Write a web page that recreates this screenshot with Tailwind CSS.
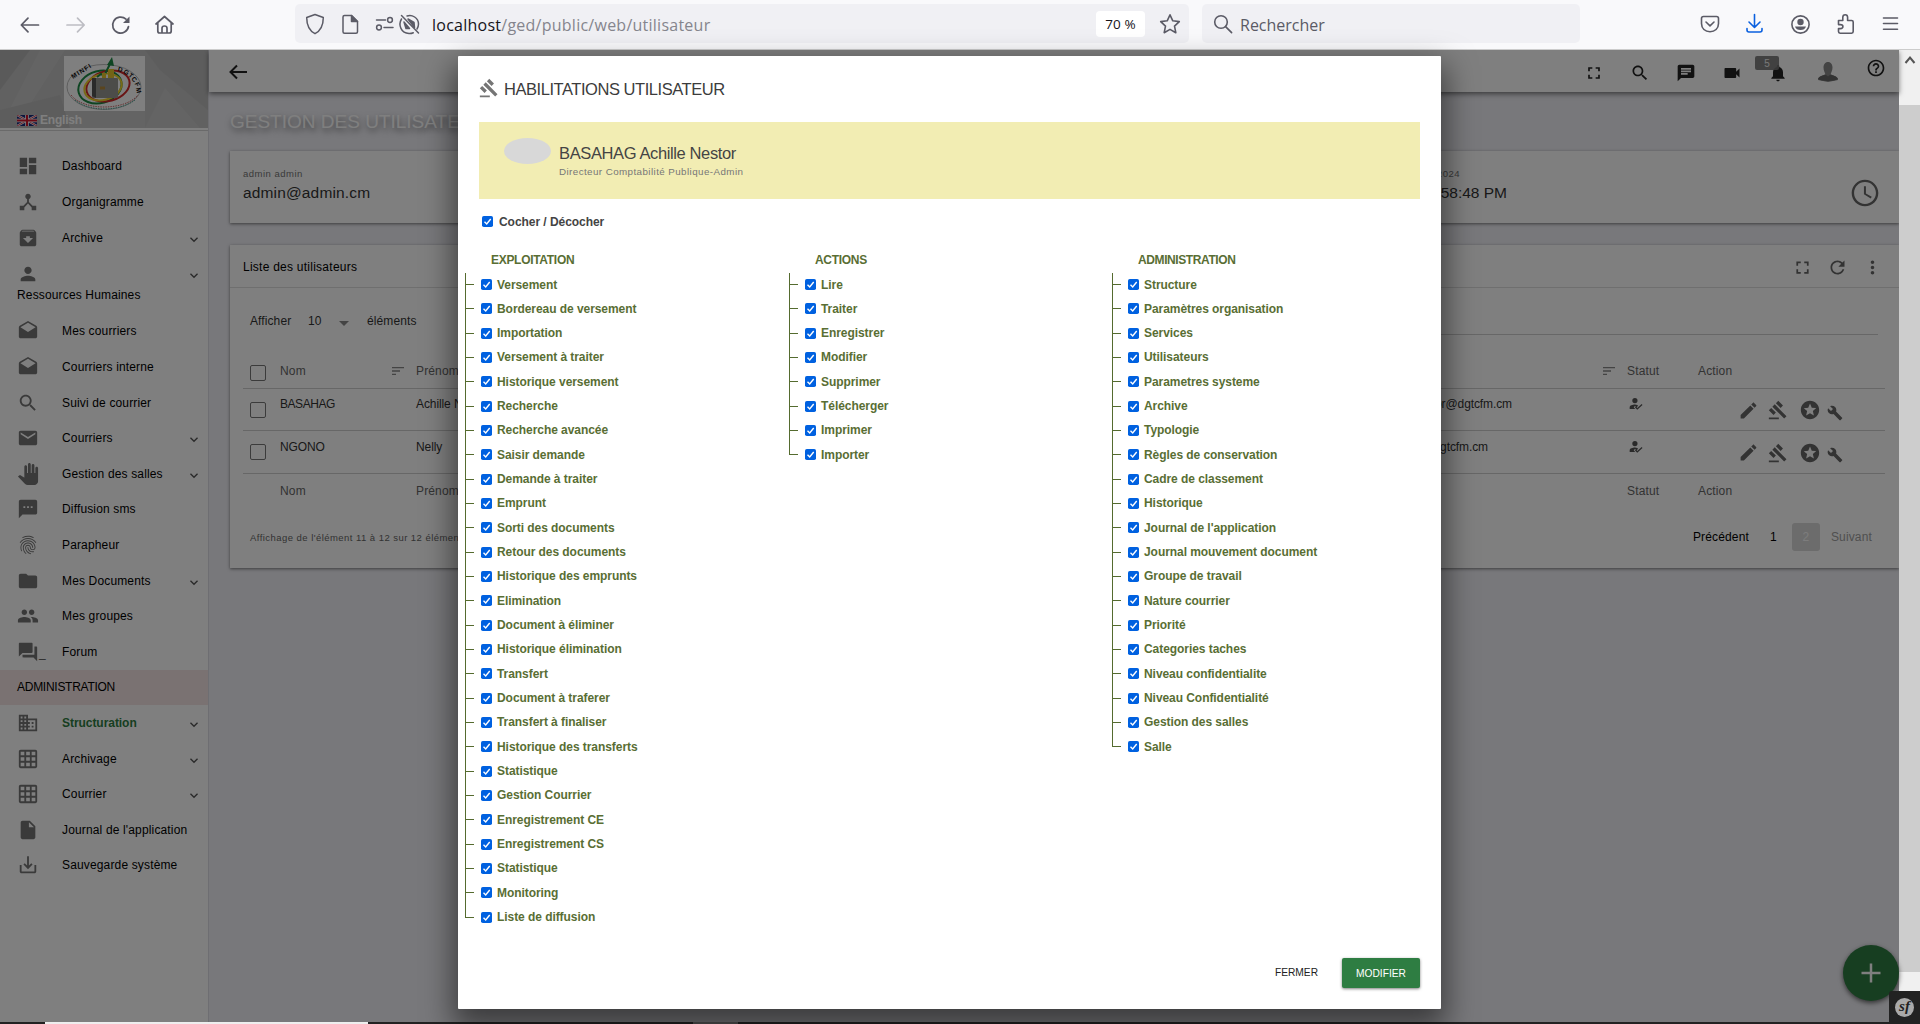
<!DOCTYPE html>
<html lang="fr">
<head>
<meta charset="utf-8">
<title>Habilitations utilisateur</title>
<script src="https://cdn.jsdelivr.net/npm/@tailwindcss/browser@4"></script>
</head>
<body class="relative h-[1024px] w-[1920px] overflow-hidden bg-[#222] font-['Liberation_Sans',sans-serif] text-[12px]">

<svg class="hidden">
  <symbol id="dashboard" viewBox="0 0 24 24"><path d="M3 13h8V3H3v10zm0 8h8v-6H3v6zm10 0h8V11h-8v10zm0-18v6h8V3h-8z"/></symbol>
  <symbol id="hub" viewBox="0 0 24 24"><path d="M17 16l-4-4V8.82C14.16 8.4 15 7.3 15 6c0-1.66-1.34-3-3-3S9 4.34 9 6c0 1.3.84 2.4 2 2.82V12l-4 4H3v5h5v-3.05l4-4.2 4 4.2V21h5v-5h-4z"/></symbol>
  <symbol id="archive" viewBox="0 0 24 24"><path d="M20.54 5.23l-1.39-1.68C18.88 3.21 18.47 3 18 3H6c-.47 0-.88.21-1.16.55L3.46 5.23C3.17 5.57 3 6.02 3 6.5V19c0 1.1.9 2 2 2h14c1.1 0 2-.9 2-2V6.5c0-.48-.17-.93-.46-1.27zM12 17.5L6.5 12H10v-2h4v2h3.5L12 17.5zM5.12 5l.81-1h12l.94 1H5.12z"/></symbol>
  <symbol id="person" viewBox="0 0 24 24"><path d="M12 12c2.21 0 4-1.79 4-4s-1.79-4-4-4-4 1.79-4 4 1.79 4 4 4zm0 2c-2.67 0-8 1.34-8 4v2h16v-2c0-2.66-5.33-4-8-4z"/></symbol>
  <symbol id="drafts" viewBox="0 0 24 24"><path d="M21.99 8c0-.72-.37-1.35-.94-1.7L12 1 2.95 6.3C2.38 6.65 2 7.28 2 8v10c0 1.1.9 2 2 2h16c1.1 0 2-.9 2-2l-.01-10zM12 13L3.74 7.84 12 3l8.26 4.84L12 13z"/></symbol>
  <symbol id="search" viewBox="0 0 24 24"><path d="M15.5 14h-.79l-.28-.27C15.41 12.59 16 11.11 16 9.5 16 5.91 13.09 3 9.5 3S3 5.91 3 9.5 5.91 16 9.5 16c1.61 0 3.09-.59 4.23-1.57l.27.28v.79l5 4.99L20.49 19l-4.99-5zm-6 0C7.01 14 5 11.99 5 9.5S7.01 5 9.5 5 14 7.01 14 9.5 11.99 14 9.5 14z"/></symbol>
  <symbol id="email" viewBox="0 0 24 24"><path d="M20 4H4c-1.1 0-1.99.9-1.99 2L2 18c0 1.1.9 2 2 2h16c1.1 0 2-.9 2-2V6c0-1.1-.9-2-2-2zm0 4l-8 5-8-5V6l8 5 8-5v2z"/></symbol>
  <symbol id="hand" viewBox="0 0 24 24"><path d="M23 5.5V20c0 2.2-1.8 4-4 4h-7.3c-1.08 0-2.1-.43-2.85-1.19L1 14.83s1.26-1.23 1.3-1.25c.22-.19.49-.29.79-.29.22 0 .42.06.6.16.04.01 4.31 2.46 4.31 2.46V4c0-.83.67-1.5 1.5-1.5S11 3.17 11 4v7h1V1.5c0-.83.67-1.5 1.5-1.5S15 .67 15 1.5V11h1V2.5c0-.83.67-1.5 1.5-1.5s1.5.67 1.5 1.5V11h1V5.5c0-.83.67-1.5 1.5-1.5s1.5.67 1.5 1.5z"/></symbol>
  <symbol id="sms" viewBox="0 0 24 24"><path d="M20 2H4c-1.1 0-1.99.9-1.99 2L2 22l4-4h14c1.1 0 2-.9 2-2V4c0-1.1-.9-2-2-2zM9 11H7V9h2v2zm4 0h-2V9h2v2zm4 0h-2V9h2v2z"/></symbol>
  <symbol id="finger" viewBox="0 0 24 24"><path d="M17.81 4.47c-.08 0-.16-.02-.23-.06C15.66 3.42 14 3 12.01 3c-1.98 0-3.86.47-5.57 1.41-.24.13-.54.04-.68-.2-.13-.24-.04-.55.2-.68C7.82 2.52 9.86 2 12.01 2c2.13 0 3.99.47 6.03 1.52.25.13.34.43.21.67-.09.18-.26.28-.44.28zM3.5 9.72c-.1 0-.2-.03-.29-.09-.23-.16-.28-.47-.12-.7.99-1.4 2.25-2.5 3.75-3.27C9.98 4.04 14 4.03 17.15 5.65c1.5.77 2.76 1.86 3.75 3.25.16.22.11.54-.12.7-.23.16-.54.11-.7-.12-.9-1.26-2.04-2.25-3.39-2.94-2.87-1.47-6.54-1.47-9.4.01-1.36.7-2.5 1.7-3.4 2.96-.08.14-.23.21-.39.21zm6.25 12.07c-.13 0-.26-.05-.35-.15-.87-.87-1.34-1.43-2.01-2.64-.69-1.23-1.05-2.73-1.05-4.34 0-2.97 2.54-5.39 5.66-5.39s5.66 2.42 5.66 5.39c0 .28-.22.5-.5.5s-.5-.22-.5-.5c0-2.42-2.09-4.39-4.66-4.39-2.57 0-4.66 1.97-4.66 4.39 0 1.44.32 2.77.93 3.85.64 1.15 1.08 1.64 1.85 2.42.19.2.19.51 0 .71-.11.1-.24.15-.37.15zm7.17-1.85c-1.19 0-2.24-.3-3.1-.89-1.49-1.01-2.38-2.65-2.38-4.39 0-.28.22-.5.5-.5s.5.22.5.5c0 1.41.72 2.74 1.94 3.56.71.48 1.54.71 2.54.71.24 0 .64-.03 1.04-.1.27-.05.53.13.58.41.05.27-.13.53-.41.58-.57.11-1.07.12-1.21.12zM14.91 22c-.04 0-.09-.01-.13-.02-1.59-.44-2.63-1.03-3.72-2.1-1.4-1.39-2.17-3.24-2.17-5.22 0-1.62 1.38-2.94 3.08-2.94 1.7 0 3.08 1.32 3.08 2.94 0 1.07.93 1.94 2.08 1.94s2.08-.87 2.08-1.94c0-3.77-3.25-6.83-7.25-6.83-2.84 0-5.44 1.58-6.61 4.03-.39.81-.59 1.76-.59 2.8 0 .78.07 2.01.67 3.61.1.26-.03.55-.29.64-.26.1-.55-.04-.64-.29-.49-1.31-.73-2.61-.73-3.96 0-1.2.23-2.29.68-3.24 1.33-2.79 4.28-4.6 7.51-4.6 4.55 0 8.25 3.51 8.25 7.83 0 1.62-1.38 2.94-3.08 2.94s-3.08-1.32-3.08-2.94c0-1.07-.93-1.94-2.08-1.94s-2.08.87-2.08 1.94c0 1.71.66 3.31 1.87 4.51.95.94 1.86 1.46 3.27 1.85.27.07.42.35.35.61-.05.23-.26.38-.47.38z"/></symbol>
  <symbol id="folder" viewBox="0 0 24 24"><path d="M10 4H4c-1.1 0-1.99.9-1.99 2L2 18c0 1.1.9 2 2 2h16c1.1 0 2-.9 2-2V8c0-1.1-.9-2-2-2h-8l-2-2z"/></symbol>
  <symbol id="people" viewBox="0 0 24 24"><path d="M16 11c1.66 0 2.99-1.34 2.99-3S17.66 5 16 5c-1.66 0-3 1.34-3 3s1.34 3 3 3zm-8 0c1.66 0 2.99-1.34 2.99-3S9.66 5 8 5C6.34 5 5 6.34 5 8s1.34 3 3 3zm0 2c-2.33 0-7 1.17-7 3.5V19h14v-2.500c0-2.330-4.670-3.500-7-3.500zm8 0c-.29 0-.62.02-.97.05 1.16.84 1.97 1.970 1.970 3.450V19h6v-2.500c0-2.330-4.670-3.500-7-3.500z"/></symbol>
  <symbol id="forum" viewBox="0 0 24 24"><path d="M21 6h-2v9H6v2c0 .55.45 1 1 1h11l4 4V7c0-.55-.45-1-1-1zm-4 6V3c0-.55-.45-1-1-1H3c-.55 0-1 .45-1 1v14l4-4h10c.55 0 1-.45 1-1z"/></symbol>
  <symbol id="domain" viewBox="0 0 24 24"><path d="M12 7V3H2v18h20V7H12zM6 19H4v-2h2v2zm0-4H4v-2h2v2zm0-4H4V9h2v2zm0-4H4V5h2v2zm4 12H8v-2h2v2zm0-4H8v-2h2v2zm0-4H8V9h2v2zm0-4H8V5h2v2zm10 12h-8v-2h2v-2h-2v-2h2v-2h-2V9h8v10zm-2-8h-2v2h2v-2zm0 4h-2v2h2v-2z"/></symbol>
  <symbol id="grid" viewBox="0 0 24 24"><path d="M20 2H4c-1.100 0-2 .9-2 2v16c0 1.100.9 2 2 2h16c1.100 0 2-.9 2-2V4c0-1.100-.9-2-2-2zM8 20H4v-4h4v4zm0-6H4v-4h4v4zm0-6H4V4h4v4zm6 12h-4v-4h4v4zm0-6h-4v-4h4v4zm0-6h-4V4h4v4zm6 12h-4v-4h4v4zm0-6h-4v-4h4v4zm0-6h-4V4h4v4z"/></symbol>
  <symbol id="file" viewBox="0 0 24 24"><path d="M6 2c-1.100 0-1.990.9-1.990 2L4 20c0 1.100.89 2 1.990 2H18c1.100 0 2-.9 2-2V8l-6-6H6zm7 7V3.500L18.500 9H13z"/></symbol>
  <symbol id="inbox" viewBox="0 0 24 24"><path d="M19 12v7H5v-7H3v7c0 1.100.9 2 2 2h14c1.100 0 2-.9 2-2v-7h-2zm-6 .67l2.590-2.580L17 11.500l-5 5-5-5 1.410-1.410L11 12.670V2.500h2z"/></symbol>
  <symbol id="chev" viewBox="0 0 24 24"><path d="M7.410 7.840L12 12.420l4.590-4.580L18 9.250l-6 6-6-6z"/></symbol>
  <symbol id="full" viewBox="0 0 24 24"><path d="M7 14H5v5h5v-2H7v-3zm-2-4h2V7h3V5H5v5zm12 7h-3v2h5v-5h-2v3zM14 5v2h3v3h2V5h-5z"/></symbol>
  <symbol id="chat" viewBox="0 0 24 24"><path d="M20 2H4c-1.100 0-1.990.9-1.990 2L2 22l4-4h14c1.100 0 2-.9 2-2V4c0-1.100-.9-2-2-2zM6 9h12v2H6V9zm8 5H6v-2h8v2zm4-6H6V6h12v2z"/></symbol>
  <symbol id="video" viewBox="0 0 24 24"><path d="M17 10.500V7c0-.55-.45-1-1-1H4c-.55 0-1 .45-1 1v10c0 .55.45 1 1 1h12c.55 0 1-.45 1-1v-3.500l4 4v-11l-4 4z"/></symbol>
  <symbol id="bell" viewBox="0 0 24 24"><path d="M12 22c1.100 0 2-.9 2-2h-4c0 1.100.89 2 2 2zm6-6v-5c0-3.070-1.640-5.640-4.500-6.320V4c0-.83-.67-1.500-1.500-1.500s-1.500.67-1.500 1.500v.68C7.630 5.360 6 7.920 6 11v5l-2 2v1h16v-1l-2-2z"/></symbol>
  <symbol id="help" viewBox="0 0 24 24"><path d="M11 18h2v-2h-2v2zm1-16C6.480 2 2 6.480 2 12s4.480 10 10 10 10-4.480 10-10S17.520 2 12 2zm0 18c-4.410 0-8-3.590-8-8s3.590-8 8-8 8 3.590 8 8-3.590 8-8 8zm0-14c-2.210 0-4 1.790-4 4h2c0-1.100.9-2 2-2s2 .9 2 2c0 2-3 1.750-3 5h2c0-2.250 3-2.500 3-5 0-2.210-1.790-4-4-4z"/></symbol>
  <symbol id="clock" viewBox="0 0 24 24"><path d="M11.990 2C6.470 2 2 6.480 2 12s4.470 10 9.990 10C17.520 22 22 17.520 22 12S17.520 2 11.990 2zM12 20.200c-4.550 0-8.200-3.650-8.200-8.200S7.450 3.800 12 3.800s8.200 3.650 8.200 8.200-3.650 8.200-8.200 8.200zM12.700 7H11.200v6l5.100 3.100.75-1.200-4.350-2.600z"/></symbol>
  <symbol id="refresh" viewBox="0 0 24 24"><path d="M17.650 6.350C16.200 4.900 14.210 4 12 4c-4.420 0-7.990 3.580-7.990 8s3.570 8 7.990 8c3.730 0 6.840-2.550 7.730-6h-2.080c-.82 2.330-3.040 4-5.650 4-3.310 0-6-2.690-6-6s2.690-6 6-6c1.660 0 3.140.69 4.220 1.780L13 11h7V4l-2.350 2.350z"/></symbol>
  <symbol id="dots" viewBox="0 0 24 24"><path d="M12 8c1.100 0 2-.9 2-2s-.9-2-2-2-2 .9-2 2 .9 2 2 2zm0 2c-1.100 0-2 .9-2 2s.9 2 2 2 2-.9 2-2-.9-2-2-2zm0 6c-1.100 0-2 .9-2 2s.9 2 2 2 2-.9 2-2-.9-2-2-2z"/></symbol>
  <symbol id="sort" viewBox="0 0 24 24"><path d="M3 18h6v-2H3v2zM3 6v2h18V6H3zm0 7h12v-2H3v2z"/></symbol>
  <symbol id="edit" viewBox="0 0 24 24"><path d="M3 17.250V21h3.750L17.810 9.940l-3.750-3.750L3 17.250zM20.710 7.040c.39-.39.39-1.020 0-1.410l-2.340-2.340c-.39-.39-1.020-.39-1.410 0l-1.830 1.830 3.750 3.750 1.830-1.830z"/></symbol>
  <symbol id="gavel" viewBox="0 0 24 24"><path d="M1 21h12v2H1zM5.245 8.070l2.830-2.827 14.140 14.142-2.828 2.828zM12.317 1l5.657 5.656-2.830 2.830-5.654-5.660zM3.825 9.485l5.657 5.657-2.828 2.828-5.657-5.657z"/></symbol>
  <symbol id="stars" viewBox="0 0 24 24"><path d="M11.990 2C6.470 2 2 6.480 2 12s4.470 10 9.990 10C17.520 22 22 17.520 22 12S17.520 2 11.990 2zm4.240 16L12 15.450 7.770 18l1.120-4.810-3.730-3.230 4.920-.42L12 5l1.920 4.530 4.920.42-3.730 3.230L16.230 18z"/></symbol>
  <symbol id="build" viewBox="0 0 24 24"><path d="M22.700 19l-9.100-9.100c.9-2.300.4-5-1.500-6.900-2-2-5-2.400-7.400-1.300L9 6 6 9 1.600 4.700C.4 7.100.9 10.100 2.900 12.100c1.900 1.900 4.600 2.400 6.900 1.500l9.100 9.100c.4.4 1 .4 1.400 0l2.300-2.300c.5-.4.5-1.100.1-1.400z"/></symbol>
  <symbol id="usercheck" viewBox="0 0 24 24"><path d="M11 1.500a4.500 4.500 0 1 0 0 9 4.500 4.500 0 0 0 0-9zM11 13c-4 0-9 1.500-9 5v2.500h9.500l-2.500-3 2-2 3 2.500 2.500-3.500C14.500 13.500 12.500 13 11 13zM22.500 12l-7.500 7-2.500-2.500-1.500 1.500 4 4 9-8.500z"/></symbol>
</svg>

<!-- browser toolbar -->
<header class="flex h-[50px] w-full items-start border-b border-[#ccc] bg-[#f9f9fb] text-[#5b5b66]">
  <svg class="mt-[10px] ml-[18px] h-[30px] w-[170px] shrink-0 fill-none stroke-current stroke-[1.7]" viewBox="0 0 170 30" stroke-linecap="round" stroke-linejoin="round">
    <path d="M20.500 15H3.500M10 8.200L3.300 15l6.700 6.800"/>
    <path class="stroke-[#bdbdc3]" d="M49 15h17M59.500 8.200l6.700 6.800-6.700 6.800"/>
    <path d="M110.500 16.500a8 8 0 1 1-2.500-7.300"/><path class="fill-current stroke-none" d="M111.500 6.500v6.500h-6.500z"/>
    <path d="M138 14l8.500-7.500 8.500 7.500M139.800 12.700V21c0 1.200.7 2 1.800 2h9.800c1.100 0 1.800-.8 1.800-2v-8.300M144 22.700v-4.500c0-1.600 1-2.200 2.500-2.200s2.500.6 2.500 2.200v4.500"/>
  </svg>
  <div class="mt-1 ml-[107px] flex h-[39px] w-[894px] shrink-0 items-center rounded-[5px] bg-[#f0f0f4]">
    <svg class="ml-2 h-[26px] w-[118px] shrink-0 fill-none stroke-current stroke-[1.5]" viewBox="0 0 118 26" stroke-linecap="round" stroke-linejoin="round">
      <path d="M12 3.500l8.300 3c0 8-2.500 13.200-8.300 16.200-5.800-3-8.300-8.200-8.300-16.200z"/>
      <path d="M41.500 4.500h7l6 6v10.200c0 .9-.6 1.500-1.500 1.500H41.500c-.9 0-1.500-.6-1.500-1.500V6c0-.9.6-1.500 1.500-1.500z"/><path class="fill-current" d="M48.500 4.500l6 6h-6z"/>
      <path d="M73.500 9h9M81 16.500h9"/><circle cx="87" cy="9" r="2.400"/><circle cx="76" cy="16.500" r="2.400"/>
      <path d="M98.500 4.500l17 17.500M104 5c5-2 11.500 2 11.500 8 0 1.800-.5 3.500-1.500 5M98.500 8c-3.500 6-.5 14 7.500 14.500 1.700.1 3-.2 4.300-.8"/><path class="fill-current" d="M105 8l6 3.500.5 5zM101 11l5.500 6.500-3.500 0z"/>
    </svg>
    <p class="ml-[11px] w-[664px] shrink-0 pt-[2px] font-['Open_Sans',sans-serif] text-[16px] tracking-[0.25px] text-[#85858d]"><span class="text-[#15141a]">localhost</span>/ged/public/web/utilisateur</p>
    <p class="flex h-[26px] w-[49px] shrink-0 items-center justify-center rounded-[4px] bg-white pt-px font-['Open_Sans',sans-serif] text-[13.500px] tracking-[0.1px] text-[#15141a]">70 %</p>
    <svg class="ml-[14px] h-[22px] w-[22px] fill-none stroke-current stroke-[1.6]" viewBox="0 0 22 22" stroke-linejoin="round"><path d="M11 1.800l2.800 6 6.500.8-4.800 4.500 1.300 6.600L11 16.400l-5.800 3.300 1.300-6.600L1.700 8.600l6.500-.8z"/></svg>
  </div>
  <div class="mt-1 ml-[13px] flex h-[39px] w-[378px] shrink-0 items-center rounded-[5px] bg-[#f0f0f4]">
    <svg class="ml-[11px] h-5 w-5 fill-none stroke-current stroke-[1.6]" viewBox="0 0 20 20" stroke-linecap="round"><circle cx="8" cy="8" r="6.300"/><path d="M12.600 12.600l6 6"/></svg>
    <p class="ml-[7px] pt-[2px] font-['Open_Sans',sans-serif] text-[16px] text-[#5b5b66]">Rechercher</p>
  </div>
  <svg class="mt-[10px] ml-[118px] h-[30px] w-[205px] shrink-0 fill-none stroke-current stroke-[1.600]" viewBox="0 0 205 30" stroke-linecap="round" stroke-linejoin="round">
    <path d="M5.500 6.500h13c1.200 0 2 .8 2 2v5c0 5-3.600 8.300-8.500 8.300s-8.500-3.300-8.500-8.300v-5c0-1.200.8-2 2-2zM8 12l4 3.800 4-3.800"/>
    <path class="stroke-[#0a60df]" d="M56.500 4.500V17M51 12l5.500 5.500L62 12M49 18.500v1.500c0 1.300.8 2 2 2h11c1.300 0 2-.7 2-2v-1.500"/>
    <circle cx="102.500" cy="14.500" r="8.600"/><circle class="fill-current stroke-none" cx="102.500" cy="12" r="3.200"/><path class="fill-current stroke-none" d="M97 16.500h11c-.6 2.300-2.800 3.600-5.500 3.600s-5-1.300-5.500-3.600z"/>
    <path d="M140.500 10.500h4.300V7.300c0-1.600 1-2.600 2.400-2.600s2.400 1 2.400 2.600v3.200h4c1 0 1.600.6 1.600 1.600v9.500c0 1-.6 1.600-1.600 1.600h-11.500c-1 0-1.600-.6-1.600-1.600v-3h2c1.500 0 2.400-.8 2.400-2s-.9-2-2.400-2h-2z"/>
    <path d="M185.500 8h14M185.500 13.500h14M185.500 19.200h14"/>
  </svg>
</header>

<div class="flex h-[972px] w-full overflow-hidden">
  <!-- sidebar -->
  <aside class="h-full w-[209px] shrink-0 border-r border-[#dcdce4] bg-white">
    <div class="relative h-[78px] w-full bg-[#c2c2c2]">
      <svg class="absolute inset-0 h-[78px] w-[208px]" viewBox="0 0 208 78"><path fill="#c9c9c9" d="M0 78L40 0h25L15 78zM145 78l20-40 35 40zM65 60l80-20v38H60z"/><path fill="#bbb" d="M145 0h63v60L160 20zM0 60l60-15 10 33H0z"/><path fill="#b5b5b5" d="M0 0h30L0 40z"/></svg>
      <svg class="absolute top-[6px] left-[64px] h-[55px] w-[81px]" viewBox="0 0 81 55">
        <rect width="81" height="55" fill="#fff"/>
        <g fill="none"><ellipse cx="40" cy="31" rx="37" ry="22.500" stroke="#bbb"/><ellipse cx="36" cy="31" rx="22" ry="16" stroke="#1d8a45" stroke-width="2" transform="rotate(-15 36 31)"/><ellipse cx="44" cy="30" rx="22" ry="15" stroke="#d32a2a" stroke-width="2" transform="rotate(-15 44 30)"/><ellipse cx="39" cy="31" rx="19" ry="13" stroke="#f0d22c" stroke-width="2" transform="rotate(-15 39 31)"/><path d="M33 21l4-3 3 2 7-14" stroke="#1d8a45" stroke-width="2"/><path d="M7 39c12 16 54 16 67 0" stroke="#c66" stroke-dasharray="1.500 1"/><path d="M11 44c14 12 44 12 60 0" stroke="#5a9" stroke-dasharray="1.500 1"/></g>
        <path d="M43 9l5-8 2 9z" fill="#1d8a45"/><path d="M44 13h6v10h-6zM38 17h4v6h-4z" fill="#e6c62c"/><rect x="28" y="22" width="26" height="20" rx="1" fill="#999993"/><path d="M28 22h4v20l-4-2z" fill="#555"/><path d="M36 32h5" stroke="#b48a3c" stroke-width="3"/>
        <g font-family="Liberation Sans" font-weight="700" font-size="6.500" fill="#111"><text x="9" y="23" transform="rotate(-32 9 23)" textLength="22">MINFI</text><text x="53.500" y="15" transform="rotate(14 53.500 15)">D</text><text x="59" y="17" transform="rotate(28 59 17)">G</text><text x="64" y="20" transform="rotate(38 64 20)">T</text><text x="67" y="23" transform="rotate(50 67 23)">C</text><text x="70.500" y="27.500" transform="rotate(65 70.500 27.500)">F</text><text x="72" y="32" transform="rotate(80 72 32)">M</text></g>
      </svg>
      <div class="absolute top-[64px] left-[17px] flex items-center gap-[3px]">
        <svg class="h-[11px] w-5" viewBox="0 0 20 11"><rect width="20" height="11" fill="#1b2a7a"/><path d="M0 0l20 11M20 0L0 11" stroke="#fff" stroke-width="2.200"/><path d="M0 0l20 11M20 0L0 11" stroke="#d0142c" stroke-width=".8"/><path d="M10 0v11M0 5.500h20" stroke="#fff" stroke-width="3.600"/><path d="M10 0v11M0 5.500h20" stroke="#d0142c" stroke-width="2"/></svg>
        <span class="text-[12px] leading-3 font-bold tracking-[-0.2px] text-white">English</span>
      </div>
    </div>
    <div class="mb-[17.200px] h-[3px] border-b border-[#d4d4d4]"></div>
    <nav id="menu" class="tracking-[0.15px] text-black"></nav>
  </aside>

  <!-- content -->
  <main class="flex h-full w-[1690px] shrink-0 flex-col bg-[#f0f0f6]">
    <div class="relative flex h-[42px] shrink-0 items-center bg-white shadow-[0_2px_5px_rgba(0,0,0,0.5)]">
      <svg class="ml-[19px] h-5 w-5 fill-none stroke-[#222] stroke-2" viewBox="0 0 20 20"><path d="M19 11H3M9 4.500L2.500 11 9 17.500"/></svg>
      <div class="ml-auto flex items-center fill-[#222] pt-[4px] pr-[13px]">
        <svg class="mr-[26px] h-5 w-5"><use href="#full"/></svg>
        <svg class="mr-[26px] h-5 w-5"><use href="#search"/></svg>
        <svg class="mr-[26px] h-5 w-5"><use href="#chat"/></svg>
        <svg class="mr-[26px] h-5 w-5"><use href="#video"/></svg>
        <div class="relative mr-[29px] h-5 w-5">
          <svg class="h-5 w-5"><use href="#bell"/></svg>
          <span class="absolute -top-[7px] -left-[13px] flex h-[14px] w-6 items-center justify-center rounded-[2px] bg-[#757575]/90 text-[10px] text-[#f0f0f0]">5</span>
        </div>
        <svg class="mr-[27px] h-[21px] w-[22px] -translate-y-[2px]" viewBox="0 0 22 21"><path fill="#888" d="M11 1c3 0 4.500 2.500 4.500 5.500S14 12 13.500 13.500c2 1 7.500 1.500 7.500 5.500l-10 2-10-2c0-4 5.500-4.500 7.500-5.500C8 12 6.500 9.500 6.500 6.500S8 1 11 1z"/><path fill="#666" d="M1 18c1-3 5-3.500 7.500-4.500l2.500 2 2.500-2C16 14.500 20 15 21 18c-3 2.500-17 2.500-20 0z"/></svg>
        <svg class="h-5 w-5 -translate-y-[5px]"><use href="#help"/></svg>
      </div>
    </div>
    <h1 class="mt-[19px] mb-[2px] ml-[21px] h-[22px] text-[19px] leading-[22px] tracking-[0px] whitespace-nowrap text-white [text-shadow:1px_3px_6px_rgba(0,0,0,0.55)]">GESTION DES UTILISATEURS</h1>

    <section class="mt-4 ml-[21px] flex h-[72px] shrink-0 bg-white pt-[17px] pl-[13px] shadow-[0_1px_3px_rgba(0,0,0,0.5)]">
      <div class="w-[300px]">
        <p class="text-[9.500px] leading-3 tracking-[0.5px] text-[#757575]">admin admin</p>
        <p class="mt-1 text-[15.500px] leading-[18px] tracking-[0.15px] text-[#333]">admin@admin.cm</p>
      </div>
      <div class="ml-[816px] w-[148px] text-right whitespace-nowrap">
        <p class="pr-[47px] text-[9.500px] leading-3 tracking-[0.5px] text-[#757575]">2024</p>
        <p class="mt-1 text-[15.500px] leading-[18px] text-[#333]">:58:48 PM</p>
      </div>
      <svg class="mt-[9px] mr-[18px] ml-auto h-8 w-8 fill-[#666]"><use href="#clock"/></svg>
    </section>

    <section class="mt-[22px] ml-[21px] h-[323px] shrink-0 bg-white shadow-[0_1px_3px_rgba(0,0,0,0.5)]">
      <div class="flex h-[43px] items-center border-b border-[#dedede] pr-[16px] pl-[13px] tracking-[0.25px]">
        <h2 class="pt-[2px] text-[12px]">Liste des utilisateurs</h2>
        <div class="ml-auto flex gap-[14px] fill-[#666] pt-[3px]">
          <svg class="h-[21px] w-[21px]"><use href="#full"/></svg>
          <svg class="h-[21px] w-[21px]"><use href="#refresh"/></svg>
          <svg class="h-[21px] w-[21px]"><use href="#dots"/></svg>
        </div>
      </div>
      <div class="mr-[21px] ml-5 flex h-[47px] items-end">
        <div class="flex h-[27px] items-start pt-[5px] leading-[16px] tracking-[0.1px] text-[#333]">
          <span class="w-[58px]">Afficher</span><span class="w-[31px]">10</span>
          <span class="mt-[8px] mr-[18px] h-0 w-0 border-x-[5.500px] border-t-[5px] border-x-transparent border-t-[#888]"></span><span>éléments</span>
        </div>
        <div class="ml-auto w-[700px] border-b border-[#cfcfcf]"></div>
      </div>
      <div id="table" class="mr-[14px] ml-[13px] pt-[13px]"></div>
      <div class="-mt-px ml-5 flex items-center pr-[20px]">
        <p class="mt-[2px] text-[9.500px] tracking-[0.45px] text-[#666]">Affichage de l'élément 11 à 12 sur 12 éléments</p>
        <div class="mr-[7px] ml-auto flex h-7 items-center tracking-[0.15px]">
          <span class="w-[77px]">Précédent</span><span class="w-[22px]">1</span>
          <span class="mr-[11px] flex h-7 w-7 items-center justify-center rounded-[3px] bg-[#d8d8d8] text-[#fafafa]">2</span>
          <span class="text-[#a0a0a0]">Suivant</span>
        </div>
      </div>
    </section>
  </main>

  <!-- scrollbar -->
  <div class="flex h-full w-[21px] shrink-0 flex-col items-center bg-[#f0f0f0]">
    <svg class="mt-[5px] h-[10px] w-3 fill-none stroke-[#555] stroke-2" viewBox="0 0 12 10"><path d="M1.500 8L6 2.500 10.500 8"/></svg>
    <div class="mt-10 h-[867px] w-full bg-[#cdcdcd]"></div>
  </div>
</div>

<!-- taskbar edge -->
<div class="flex h-[2px] w-full bg-[#222]"><div class="ml-[45px] h-full w-[323px] bg-[#eee]"></div><div class="ml-[325px] h-full w-[45px] bg-[#555]"></div></div>

<div class="absolute top-[945px] left-[1843px] flex h-14 w-14 items-center justify-center rounded-full bg-[#2e7d42] shadow-[0_2px_5px_rgba(0,0,0,0.6)]">
  <svg class="h-5 w-5 stroke-white stroke-[2.500]" viewBox="0 0 20 20"><path d="M10 .5v19M.5 10h19"/></svg>
</div>
<div class="absolute top-[50px] left-0 h-[972px] w-[1899px] bg-black/50"></div>

<!-- modal -->
<div class="absolute top-[56px] left-[458px] flex h-[953px] w-[983px] flex-col rounded-[1px] bg-white shadow-[0_14px_30px_5px_rgba(0,0,0,0.5)]">
  <div class="flex h-[66px] items-center gap-[5px] pl-[21px]">
    <svg class="h-5 w-5 -translate-y-px fill-[#757575]"><use href="#gavel"/></svg>
    <h2 class="text-[16.500px] tracking-[-0.45px] text-[#3c3c3c]">HABILITATIONS UTILISATEUR</h2>
  </div>
  <div class="mr-[21px] ml-[21px] flex h-[77px] bg-[#f2edb3] pt-4 pl-[25px]">
    <div class="h-[26px] w-[47px] rounded-[50%] bg-[#d8d8d8]"></div>
    <div class="ml-2 pt-[6px]">
      <p class="text-[16.500px] leading-[18px] tracking-[-0.38px] text-[#444]">BASAHAG Achille Nestor</p>
      <p class="mt-1 text-[9.800px] leading-3 tracking-[0.420px] text-[#777]">Directeur Comptabilité Publique-Admin</p>
    </div>
  </div>
  <label class="mt-[15.500px] ml-6 flex h-[14px] items-center gap-[6px] font-bold tracking-[-0.05px] text-[#444]">
    <svg class="h-[11px] w-[11px] shrink-0" viewBox="0 0 11 11"><rect width="11" height="11" rx="1.800" fill="#0061e0"/><path d="M2.500 5.800l2.200 2.200 4-5" fill="none" stroke="#fff" stroke-width="1.400"/></svg>Cocher / Décocher
  </label>
  <div id="trees" class="mt-[23.500px] ml-[7px] grid grid-cols-[324px_323px_1fr] font-bold text-[#596e34]"></div>
  <div class="absolute right-[21px] bottom-[21px] flex h-[30px] items-center text-[10.200px]">
    <button class="mr-6 text-[#222]">FERMER</button>
    <button class="h-[30px] w-[78px] rounded-[2px] bg-[#2e7d42] pt-px text-white shadow-[0_1px_3px_rgba(0,0,0,0.5)]">MODIFIER</button>
  </div>
</div>

<!-- debug toolbar toggle -->
<div class="absolute top-[991px] left-[1889px] flex h-[33px] w-[31px] items-center justify-center rounded-tl-[3px] bg-[#222]">
  <span class="flex h-[19px] w-[19px] items-center justify-center rounded-full bg-[#aaa] pb-[2px] font-['Liberation_Serif',serif] text-[15px] leading-none font-bold italic text-[#222]">sf</span>
</div>

<script>
const icon = (name, cls) => `<svg class="${cls}"><use href="#${name}"/></svg>`;

const menu = [
  ['dashboard','Dashboard'],['hub','Organigramme'],['archive','Archive',1],['person','',1],['','Ressources Humaines'],
  ['drafts','Mes courriers'],['drafts','Courriers interne'],['search','Suivi de courrier'],['email','Courriers',1],
  ['hand','Gestion des salles',1],['sms','Diffusion sms'],['finger','Parapheur'],['folder','Mes Documents',1],
  ['people','Mes groupes'],['forum','Forum'],['','ADMINISTRATION'],['domain','Structuration',1],['grid','Archivage',1],
  ['grid','Courrier',1],['file',"Journal de l'application"],['inbox','Sauvegarde système']];
document.getElementById('menu').innerHTML = menu.map(([ic, label, sub], i) => {
  if (label === 'ADMINISTRATION') return `<div class="flex h-[35.6px] items-center bg-[#f4e4e4] pl-[17px] tracking-[-0.27px]">${label}</div>`;
  if (!ic) return `<div class="h-[21.4px] pl-[17px] leading-[7px]">${label}</div>`;
  return `<div class="${i < 4 ? 'h-[36px]' : 'h-[35.6px]'} flex items-center pl-[17px]">
    ${icon(ic, 'h-[22px] w-[22px] fill-[#757575]')}
    <span class="w-[7px] self-end pb-[8px] text-[#555]">${label === 'Forum' ? '_' : ''}</span>
    <span class="${label === 'Structuration' ? 'font-bold tracking-[-0.05px] text-[#2e7d42]' : ''} ml-4 w-[126px] whitespace-nowrap">${label}</span>
    ${sub ? icon('chev', 'mt-1 -ml-[2px] h-4 w-4 fill-[#555]') : ''}</div>`;
}).join('');

const box = '<span class="h-4 w-4 rounded-[2px] border border-[#777]"></span>';
const sortIcon = icon('sort', 'h-4 w-4 fill-[#888]');
const check = icon('usercheck', 'ml-[1px] h-[14px] w-[15px] fill-[#555]');
const acts = `<span class="ml-[40px] flex items-center fill-[#666]">${icon('edit','mr-[9px] h-[21px] w-[21px]')}${icon('gavel','mr-[11px] h-[20px] w-[20px]')}${icon('stars','mr-[6px] h-[22px] w-[22px]')}${icon('build','mt-[5px] h-4 w-4')}</span>`;
const line = (o) => `<div class="${o.cls} flex items-center">
  <span class="flex w-[37px] shrink-0 pl-[7px]">${o.box ? box : ''}</span>
  <span class="${o.up} w-[110px] shrink-0">${o.nom}</span>
  <span class="${o.up} w-[26px] shrink-0">${o.head ? sortIcon : ''}</span>
  <span class="${o.up} w-[500px] shrink-0">${o.prenom}</span>
  <span class="${o.up} ${o.mailCls} shrink-0 text-right whitespace-nowrap">${o.mail}</span>
  <span class="${o.up} ${o.gapCls} shrink-0">${o.head ? sortIcon : ''}</span>
  <span class="${o.up} w-[71px] shrink-0">${o.statut}</span>
  <span class="${o.actCls} shrink-0">${o.action}</span></div>`;
document.getElementById('table').innerHTML =
  line({cls:'h-[41px] border-b border-[#cfcfcf] pt-[9px] text-[#666] tracking-[0.15px]', up:'-mt-[3px]', actCls:'-mt-[3px]', box:1, head:1, nom:'Nom', prenom:'Prénom', mailCls:'w-[596px]', gapCls:'w-[115px] pl-[89px]', mail:'', statut:'Statut', action:'Action'}) +
  line({cls:'h-[42px] border-b border-[#cfcfcf] text-[#333] tracking-[-0.1px]', up:'-mt-[11px]', actCls:'mt-px', box:1, nom:'<span class="tracking-[-0.45px]">BASAHAG</span>', prenom:'Achille Nestor', mailCls:'w-[596px]', gapCls:'w-[115px]', mail:'nestor@dgtcfm.cm', statut:check, action:acts}) +
  line({cls:'h-[43px] border-b border-[#cfcfcf] text-[#333] tracking-[-0.1px]', up:'-mt-[10px]', actCls:'mt-px', box:1, nom:'NGONO', prenom:'Nelly', mailCls:'w-[572px]', gapCls:'w-[139px]', mail:'nelly@dgtcfm.cm', statut:check, action:acts}) +
  line({cls:'h-[50px] text-[#666] tracking-[0.15px]', up:'-mt-[17px]', actCls:'-mt-[17px]', box:0, nom:'Nom', prenom:'Prénom', mailCls:'w-[596px]', gapCls:'w-[115px]', mail:'', statut:'Statut', action:'Action'});

const trees = {
  EXPLOITATION: ['Versement','Bordereau de versement','Importation','Versement à traiter','Historique versement','Recherche','Recherche avancée','Saisir demande','Demande à traiter','Emprunt','Sorti des documents','Retour des documents','Historique des emprunts','Elimination','Document à éliminer','Historique élimination','Transfert','Document à traferer','Transfert à finaliser','Historique des transferts','Statistique','Gestion Courrier','Enregistrement CE','Enregistrement CS','Statistique','Monitoring','Liste de diffusion'],
  ACTIONS: ['Lire','Traiter','Enregistrer','Modifier','Supprimer','Télécherger','Imprimer','Importer'],
  ADMINISTRATION: ['Structure','Paramètres organisation','Services','Utilisateurs','Parametres systeme','Archive','Typologie','Règles de conservation','Cadre de classement','Historique',"Journal de l'application",'Journal mouvement document','Groupe de travail','Nature courrier','Priorité','Categories taches','Niveau confidentialite','Niveau Confidentialité','Gestion des salles','Salle']
};
const checkbox = '<svg class="ml-[6.5px] mr-[5.5px] h-[11px] w-[11px] shrink-0" viewBox="0 0 11 11"><rect width="11" height="11" rx="1.800" fill="#0061e0"/><path d="M2.500 5.800l2.200 2.200 4-5" fill="none" stroke="#fff" stroke-width="1.400"/></svg>';
document.getElementById('trees').innerHTML = Object.entries(trees).map(([title, items]) => `
  <div><h3 class="h-[21px] pl-[26px] leading-[16px] ${title === 'ADMINISTRATION' ? 'tracking-[-0.4px]' : 'tracking-[-0.3px]'}">${title}</h3>
  <ul>${items.map((t, i) => `<li class="flex h-[24.34px]">
    <span class="flex w-[9px] shrink-0 flex-col"><span class="h-[12px] border-b border-l border-[#556b2f]"></span><span class="${i < items.length - 1 ? 'border-l' : ''} grow border-[#556b2f]"></span></span>
    <span class="flex h-[23px] items-center tracking-[-0.06px] whitespace-nowrap">${checkbox}${t}</span></li>`).join('')}</ul></div>`).join('');
</script>
</body>
</html>
